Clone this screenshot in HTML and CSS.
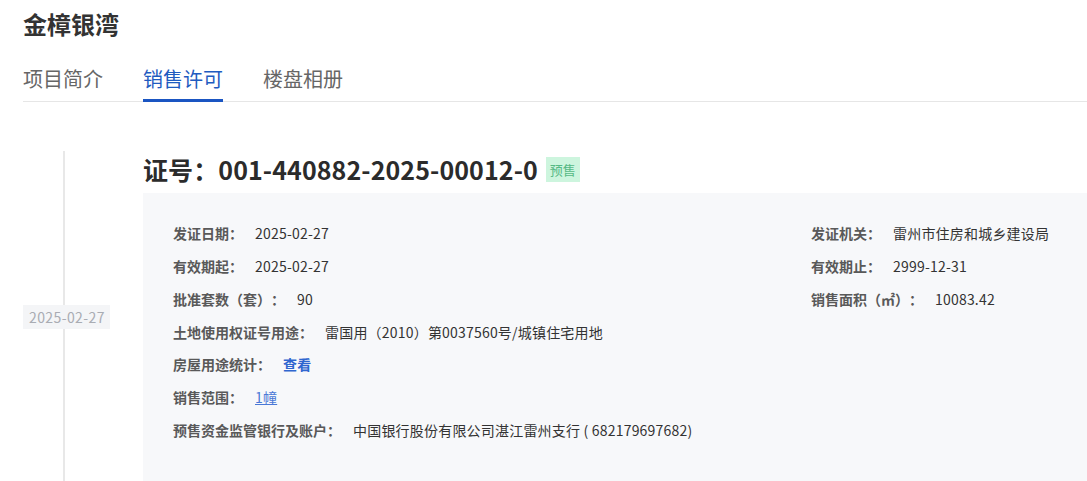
FILE: index.html
```html
<!DOCTYPE html>
<html lang="zh-CN">
<head>
<meta charset="utf-8">
<title>金樟银湾</title>
<link rel="stylesheet" href="styles.css">
</head>
<body>
<div class="page">
  <header class="header">
    <h1 class="title">金樟银湾</h1>
    <nav class="tabs">
      <a class="tab">项目简介</a>
      <a class="tab active">销售许可</a>
      <a class="tab">楼盘相册</a>
    </nav>
  </header>
  <main class="timeline">
    <section class="item">
      <div class="rail">
        <span class="date">2025-02-27</span>
      </div>
      <div class="content">
        <h2 class="cert">证号：001-440882-2025-00012-0<span class="badge">预售</span></h2>
        <div class="box">
          <div class="row"><span class="label">发证日期：</span><span class="value">2025-02-27</span></div>
          <div class="row"><span class="label">发证机关：</span><span class="value">雷州市住房和城乡建设局</span></div>
          <div class="row"><span class="label">有效期起：</span><span class="value">2025-02-27</span></div>
          <div class="row"><span class="label">有效期止：</span><span class="value">2999-12-31</span></div>
          <div class="row"><span class="label">批准套数（套）：</span><span class="value">90</span></div>
          <div class="row"><span class="label">销售面积（㎡）：</span><span class="value">10083.42</span></div>
          <div class="row wide"><span class="label">土地使用权证号用途：</span><span class="value">雷国用（2010）第0037560号/城镇住宅用地</span></div>
          <div class="row wide"><span class="label">房屋用途统计：</span><a class="value link-bold">查看</a></div>
          <div class="row wide"><span class="label">销售范围：</span><a class="value link-under">1幢</a></div>
          <div class="row wide"><span class="label">预售资金监管银行及账户：</span><span class="value">中国银行股份有限公司湛江雷州支行 ( 682179697682)</span></div>
        </div>
      </div>
    </section>
  </main>
</div>
</body>
</html>
```
FILE: styles.css
```css
* { box-sizing: border-box; }
html, body { margin: 0; padding: 0; background: #fff; }
body {
  font-family: "Noto Sans CJK SC", "Noto Sans", "Liberation Sans", sans-serif;
  color: #333;
  overflow: hidden;
  text-spacing-trim: space-all;
}
.page { padding-left: 23px; }
.header { padding-top: 8px; }
.title {
  margin: 0;
  font-size: 24px;
  line-height: 32px;
  font-weight: bold;
  color: #333;
}
.tabs {
  display: flex;
  gap: 40px;
  margin-top: 25px;
  border-bottom: 1px solid #e6e6e6;
}
.tab {
  width: 80px;
  font-size: 20px;
  line-height: 28px;
  color: #666;
  padding-bottom: 6px;
  border-bottom: 3px solid transparent;
  margin-bottom: -1px;
}
.tab.active { color: #1f5bc0; border-bottom-color: #1a55c2; }
.timeline { margin-top: 49px; }
.item { display: flex; }
.rail {
  position: relative;
  width: 120px;
  flex: none;
  display: flex;
  align-items: center;
}
.rail::before {
  content: "";
  position: absolute;
  left: 40px;
  top: 0;
  bottom: 0;
  width: 2px;
  background: #e8e8e8;
}
.date {
  position: relative;
  background: #f4f5f7;
  color: #a9acb3;
  font-size: 14px;
  line-height: 24px;
  padding: 0 5px 0 6px;
  letter-spacing: 0.4px;
}
.content { flex: 1; }
.cert {
  margin: 0 0 6px;
  font-size: 25px;
  line-height: 36px;
  font-weight: bold;
  color: #2b2b2b;
  letter-spacing: 0.1px;
  display: flex;
  align-items: center;
}
.badge {
  margin-left: 8px;
  background: #cdf5de;
  color: #56b985;
  font-size: 13px;
  font-weight: normal;
  line-height: 25px;
  letter-spacing: 0;
  padding: 0 4px;
}
.box {
  background: #f7f8fa;
  padding: 24px 30px 36px;
  display: grid;
  grid-template-columns: 638px 1fr;
  grid-auto-rows: 32.75px;
}
.row {
  display: flex;
  align-items: center;
  font-size: 14px;
  white-space: nowrap;
}
.row.wide { grid-column: 1 / -1; }
.label { color: #595959; font-weight: bold; margin-right: 12px; }
.value { color: #333; letter-spacing: 0.2px; }
.link-bold { color: #2f66cf; font-weight: bold; }
.link-under { color: #4a78d6; text-decoration: underline; }
```
